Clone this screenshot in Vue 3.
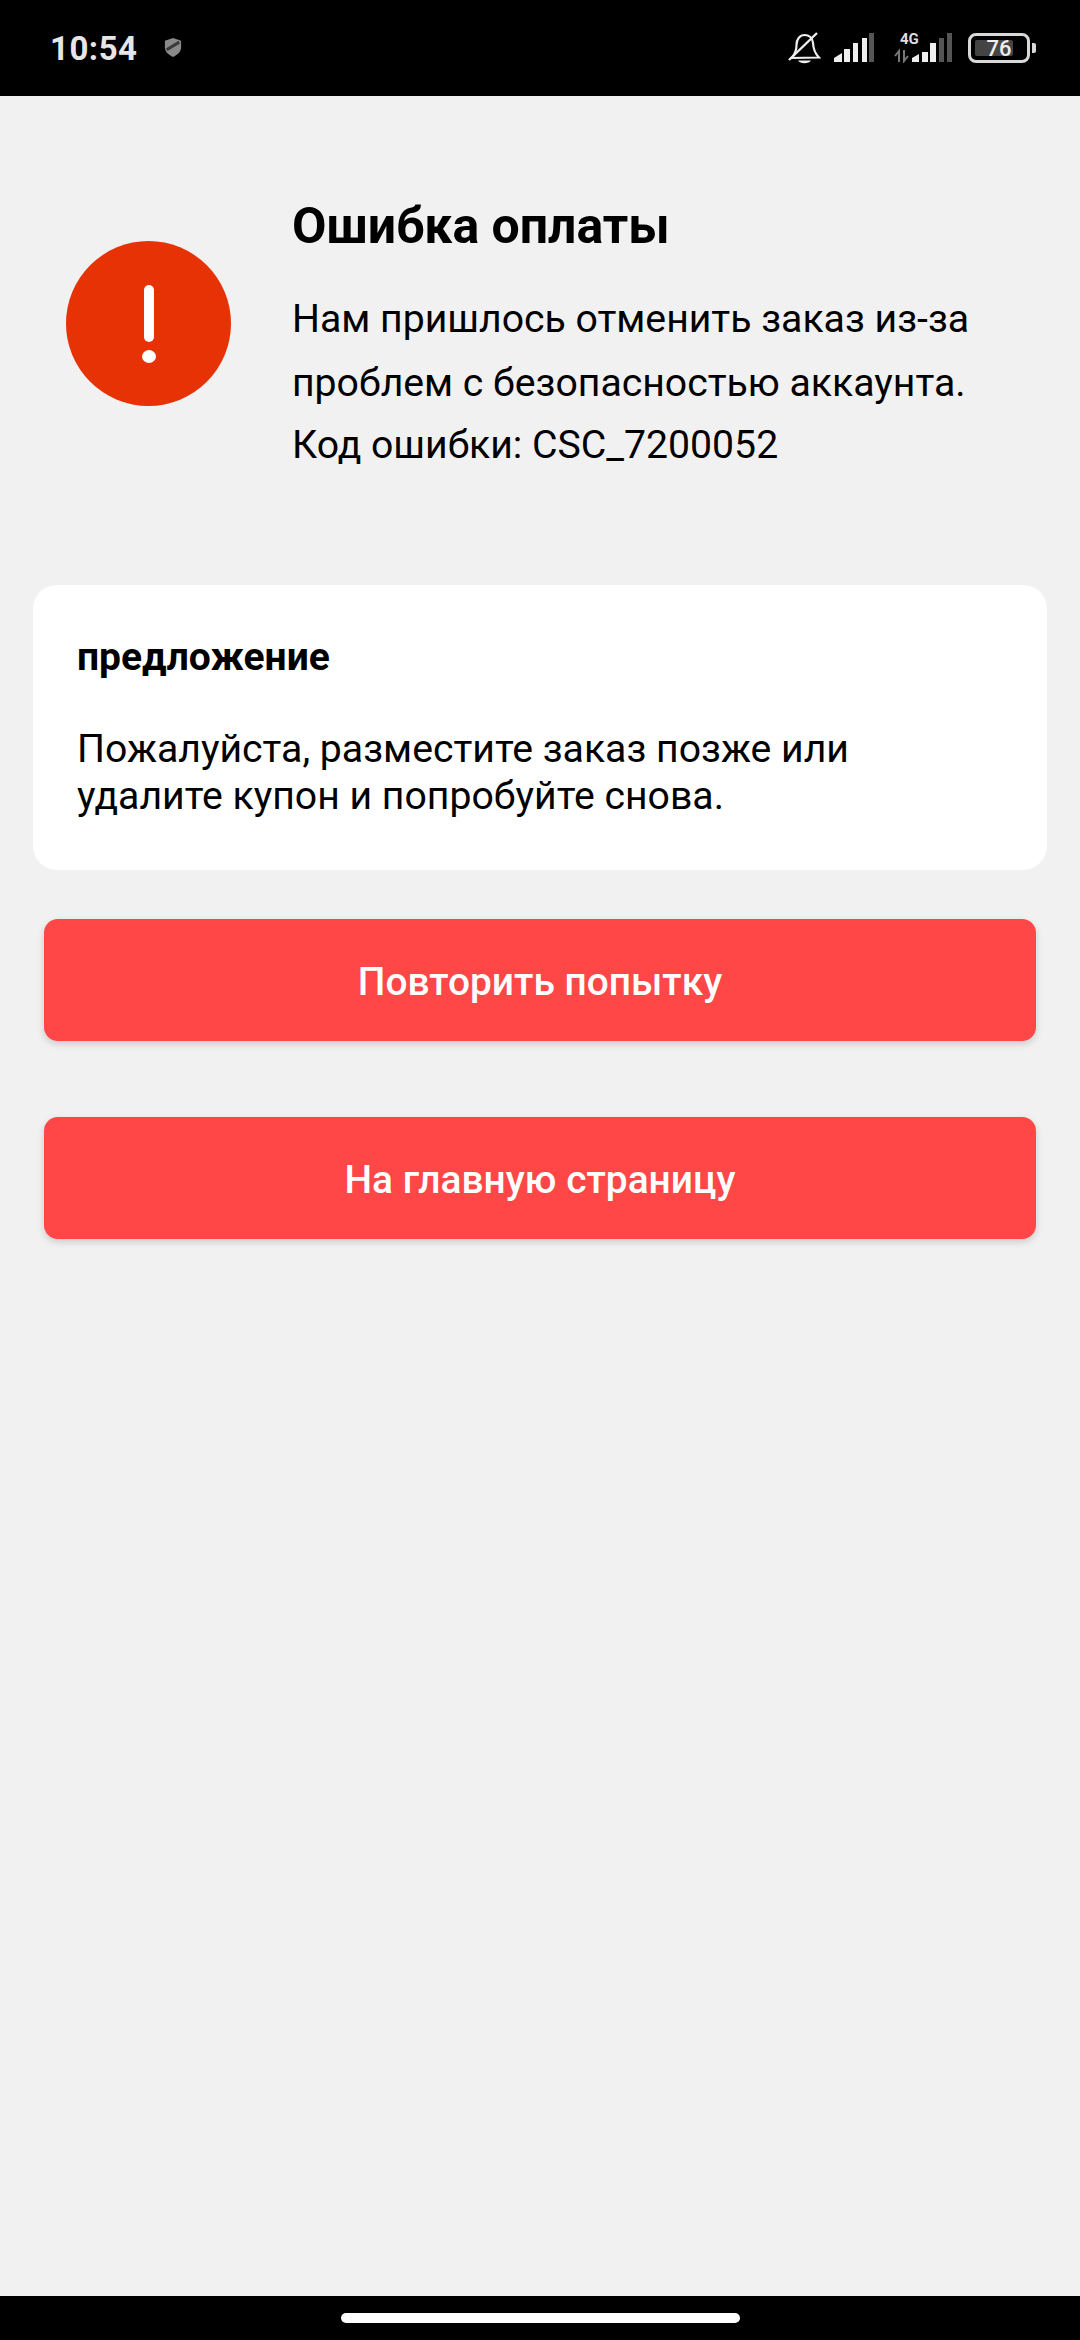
<script setup>
</script>

<template>
  <div class="page">
    <header class="status">
      <div class="status-left">
        <span class="time">10:54</span>
        <svg class="shield" width="18" height="21" viewBox="0 0 20 22">
          <path d="M10 0.5 L19 3.5 V11 C19 16 14.5 19.5 10 21.5 C5.5 19.500 1 16 1 11 V3.5 Z" fill="#8a8a8a"/>
          <path d="M3 13.500 L17 5" stroke="#3a3a3a" stroke-width="3.4" fill="none"/>
        </svg>
      </div>
      <div class="status-right">
        <svg width="33" height="32" viewBox="0 0 33 32" class="bell">
          <path d="M4 25.500 C8 21 8.500 17 8.500 13 C8.500 7 12 3 16.500 3 C21 3 24.500 6 25 11 C25.300 17 26.500 21 31 25.500 L2 26" fill="none" stroke="#eee" stroke-width="2.2"/>
          <path d="M1 28 L29 1" stroke="#eee" stroke-width="2.4"/>
          <path d="M10 28.500 H23 C21 32 12 32 10 28.500 Z" fill="#eee"/>
        </svg>
        <svg width="40" height="30" viewBox="0 0 40 30" class="sig">
          <path d="M0 29 V25 L8 20 V29 Z" fill="#eee"/>
          <rect x="10" y="16" width="6" height="13" fill="#eee"/>
          <rect x="19" y="10" width="5" height="19" fill="#eee"/>
          <rect x="28" y="5" width="5" height="24" fill="#eee"/>
          <rect x="35" y="0" width="5" height="29" fill="#555"/>
        </svg>
        <div class="net">
          <span class="g4">4G</span>
          <svg width="58" height="30" viewBox="0 0 58 30" class="sig2">
            <path d="M5 29 V18 L1 23" fill="none" stroke="#777" stroke-width="2"/>
            <path d="M10 17 V28 L14 23" fill="none" stroke="#777" stroke-width="2"/>
            <path d="M18 29 V25 L25 21 V29 Z" fill="#eee"/>
            <rect x="28" y="19" width="6" height="10" fill="#eee"/>
            <rect x="36" y="10" width="6" height="19" fill="#eee"/>
            <rect x="45" y="5" width="5" height="24" fill="#555"/>
            <rect x="53" y="0" width="5" height="29" fill="#555"/>
          </svg>
        </div>
        <div class="batt">
          <div class="batt-body">
            <div class="batt-fill"></div>
            <span class="batt-num">76</span>
          </div>
          <div class="batt-tip"></div>
        </div>
      </div>
    </header>

    <main class="main">
      <section class="hero">
        <div class="alert">
          <span class="alert-bar"></span>
          <span class="alert-dot"></span>
        </div>
        <div class="hero-text">
          <h1 class="title">Ошибка оплаты</h1>
          <p class="msg">Нам пришлось отменить заказ из-за<br>проблем с безопасностью аккаунта.</p>
          <p class="code">Код ошибки: CSC_7200052</p>
        </div>
      </section>

      <section class="card">
        <h2 class="card-title">предложение</h2>
        <p class="card-text">Пожалуйста, разместите заказ позже или<br>удалите купон и попробуйте снова.</p>
      </section>

      <button class="btn first">Повторить попытку</button>
      <button class="btn second">На главную страницу</button>
    </main>

    <footer class="nav"><span class="pill"></span></footer>
  </div>
</template>

<style scoped>
.page {
  width: 1080px;
  height: 2340px;
  display: flex;
  flex-direction: column;
  background: #f1f1f1;
  font-family: Roboto, "Noto Sans", sans-serif;
  color: #000;
  overflow: hidden;
}
.status {
  height: 96px;
  flex: none;
  background: #000;
  display: flex;
  justify-content: space-between;
  align-items: flex-start;
  padding: 0 44px 0 50px;
  box-sizing: border-box;
}
.status-left {
  display: flex;
  align-items: center;
  gap: 26px;
  height: 96px;
}
.time {
  color: #e6e6e6;
  font-size: 33px;
  font-weight: 700;
  letter-spacing: 0.5px;
}
.shield { margin-top: -2px; }
.status-right {
  display: flex;
  align-items: flex-start;
  padding-top: 32px;
}
.bell { margin-right: 13px; }
.sig { margin-right: 20px; margin-top: 1px; }
.net { position: relative; width: 58px; height: 31px; margin-right: 16px; margin-top: 1px; }
.g4 {
  position: absolute;
  left: 6px;
  top: -1px;
  font-size: 15px;
  font-weight: 700;
  color: #ddd;
  line-height: 1;
}
.sig2 { display: block; }
.batt {
  display: flex;
  align-items: center;
  gap: 2px;
  margin-top: 1px;
}
.batt-body {
  position: relative;
  width: 62px;
  height: 30px;
  box-sizing: border-box;
  border: 3px solid #d8d8d8;
  border-radius: 8px;
}
.batt-fill {
  position: absolute;
  left: 4px;
  top: 4px;
  bottom: 4px;
  width: 38px;
  background: #444;
  border-radius: 2px;
}
.batt-num {
  position: absolute;
  left: 0;
  right: 0;
  top: 0;
  bottom: 0;
  text-align: center;
  font-size: 22px;
  line-height: 25px;
  font-weight: 500;
  color: #eee;
}
.batt-tip {
  width: 4px;
  height: 10px;
  background: #d8d8d8;
  border-radius: 0 2px 2px 0;
}
.main { flex: 1; min-height: 0; }
.hero {
  display: flex;
  align-items: flex-start;
  padding: 102px 0 0 66px;
  height: 489px;
  box-sizing: border-box;
}
.alert {
  width: 165px;
  height: 165px;
  border-radius: 50%;
  background: #e63205;
  margin-top: 43px;
  margin-right: 61px;
  flex: none;
  display: flex;
  flex-direction: column;
  align-items: center;
  padding-top: 44px;
  box-sizing: border-box;
}
.alert-bar {
  width: 10px;
  height: 57px;
  border-radius: 5px;
  background: #fff;
}
.alert-dot {
  width: 14px;
  height: 13px;
  border-radius: 50%;
  background: #fff;
  margin-top: 8px;
}
.title {
  margin: 0;
  font-size: 50px;
  font-weight: 700;
  line-height: 56px;
}
.msg {
  margin: 33px 0 0;
  font-size: 39.2px;
  line-height: 64px;
}
.code {
  margin: 0;
  font-size: 39.2px;
  line-height: 60px;
}
.card {
  margin: 0 33px;
  height: 285px;
  box-sizing: border-box;
  background: #fff;
  border-radius: 24px;
  padding: 50px 44px 0;
}
.card-title {
  margin: 0;
  font-size: 39px;
  font-weight: 700;
  line-height: 44px;
}
.card-text {
  margin: 47px 0 0;
  font-size: 39.2px;
  line-height: 47px;
}
.btn {
  display: block;
  width: 992px;
  height: 122px;
  margin-left: 44px;
  border: none;
  border-radius: 14px;
  background: #ff4747;
  color: #fff;
  font-family: inherit;
  font-size: 38.9px;
  font-weight: 500;
  padding-top: 4px;
  box-shadow: 0 3px 7px rgba(0,0,0,0.16);
}
.first { margin-top: 49px; }
.second { margin-top: 76px; }
.nav {
  height: 44px;
  flex: none;
  background: #000;
  display: flex;
  justify-content: center;
  padding-top: 17px;
  box-sizing: border-box;
}
.pill {
  width: 399px;
  height: 10px;
  border-radius: 5px;
  background: #fff;
}
</style>
